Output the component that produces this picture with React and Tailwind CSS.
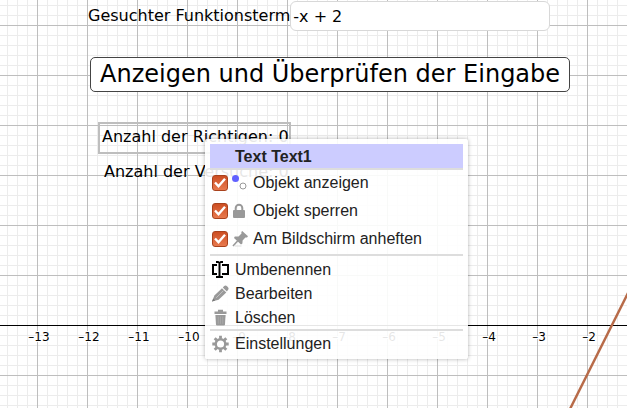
import { useState } from "react";

const axisTicks = [-13, -12, -11, -10, -9, -8, -7, -6, -5, -4, -3, -2];

// One unit is 50px, x = -13 sits at 37px
const toX = (value) => 37 + (value + 13) * 50;

const PointsIcon = () => (
  <svg viewBox="0 0 16 16" className="size-4 shrink-0">
    <circle cx="3.5" cy="3.5" r="3.5" fill="#6161ff" />
    <circle cx="11" cy="11" r="3" fill="#fff" stroke="#999" />
  </svg>
);

const LockIcon = () => (
  <svg viewBox="0 0 16 16" className="size-4 shrink-0">
    <path d="M3.7 8V5.1a3.3 3.3 0 0 1 6.6 0V8" fill="none" stroke="#999" strokeWidth="2" />
    <rect x="1" y="7" width="12" height="8" rx="1" fill="#999" />
  </svg>
);

const PinIcon = () => (
  <svg viewBox="0 0 16 16" className="size-4 shrink-0">
    <path d="M10.2 0 16 5.2 15 6.5 13.4 6.4 10.6 9.4 10.4 12.6 9 13.6 2 6.9 2.8 5.6 6.5 5.4 9.5 2.5 9.3 1Z" fill="#999" />
    <path d="M6.2 9.2 1 15" stroke="#999" strokeWidth="1.6" />
    <path d="M2.5 15h7" stroke="#ddd" />
  </svg>
);

const RenameIcon = () => (
  <svg viewBox="0 0 18 18" className="size-[18px] shrink-0" fill="none" stroke="#000" strokeWidth="2">
    <path d="M5 4H1v9h4M10 4h6v9h-6" />
    <path d="M4 1h2l1.5 1L9 1h2M7.5 1.5v14M4 16h2l1.5-1L9 16h2" strokeWidth="2" />
  </svg>
);

const PencilIcon = () => (
  <svg viewBox="0 0 18 18" className="size-[18px] shrink-0" fill="#999">
    <path d="M0 16.6 2.4 10.6 10 3.2 14.3 7.4 6.6 14.8Z" />
    <path d="m10.8 2.4 1.4-1.3c.9-.8 2-.7 2.8.1l1 1c.8.8.8 1.9 0 2.8l-1.2 1.5Z" />
    <path d="m4.2 12.8 7.3-7.2" stroke="#ccc" strokeWidth=".8" />
    <path d="m1.2 13.7 2 1.8L0 16.6Z" fill="#777" />
  </svg>
);

const TrashIcon = () => (
  <svg viewBox="0 0 18 18" className="size-[18px] shrink-0" fill="#999">
    <path d="M2.5 2.5H6V.8h5v1.7h3.5V5h-12Z" />
    <path d="M3.4 6h10.2L13 15.5q-.1 1-1 1H5q-.9 0-1-1Z" />
    <path d="M6.3 7.5v7.3M8.5 7.5v7.3M10.7 7.5v7.3" stroke="#ababab" strokeWidth=".8" />
  </svg>
);

const GearIcon = () => (
  <svg viewBox="0 0 18 18" className="size-[18px] shrink-0" fill="none" stroke="#999">
    <circle cx="8.5" cy="9" r="4.8" strokeWidth="2.4" />
    <path
      d="M8.5.8v3M8.5 14.2v3M.3 9h3M13.7 9h3M2.7 3.2l2.1 2.1M12.2 12.7l2.1 2.1M14.3 3.2l-2.1 2.1M4.8 12.7l-2.1 2.1"
      strokeWidth="2.8"
    />
  </svg>
);

const toggles = [
  { id: "show", label: "Objekt anzeigen", Icon: PointsIcon },
  { id: "lock", label: "Objekt sperren", Icon: LockIcon },
  { id: "pin", label: "Am Bildschirm anheften", Icon: PinIcon },
];

const actions = [
  { label: "Umbenennen", Icon: RenameIcon },
  { label: "Bearbeiten", Icon: PencilIcon },
  { label: "Löschen", Icon: TrashIcon },
];

const Graph = () => (
  <svg className="absolute inset-0 size-full" aria-hidden="true">
    <defs>
      <pattern id="minor" x="7" y="5" width="10" height="10" patternUnits="userSpaceOnUse">
        <path d="M.5 0v10M0 .5h10" stroke="#ececec" />
      </pattern>
      <pattern id="major" x="37" y="25" width="50" height="50" patternUnits="userSpaceOnUse">
        <path d="M.5 0v50M0 .5h50" stroke="#bebebe" />
      </pattern>
    </defs>
    <rect width="100%" height="100%" fill="url(#minor)" />
    <rect width="100%" height="100%" fill="url(#major)" />
    <rect y="325" width="100%" height="1" fill="#000" />
    {axisTicks.map((tick) => (
      <text
        key={tick}
        x={toX(tick) + 2}
        y="341"
        textAnchor="middle"
        className="fill-black stroke-white stroke-2 text-[12px] [font-family:'DejaVu_Sans',sans-serif] [paint-order:stroke]"
      >
        {`–${Math.abs(tick)}`}
      </text>
    ))}
    <path d="M570 409 652 245" stroke="#b86b49" strokeWidth="2.5" />
  </svg>
);

const ActionItem = ({ label, Icon }) => (
  <button type="button" role="menuitem" className="flex h-6 w-full items-center gap-[5px] pt-0.5 pl-0.5 text-left">
    <Icon />
    <span>{label}</span>
  </button>
);

const ContextMenu = () => {
  const [checked, setChecked] = useState({ show: true, lock: true, pin: true });

  const handleChange = (e) => {
    const { name, checked: value } = e.target;
    setChecked((prev) => ({ ...prev, [name]: value }));
  };

  return (
    <div
      role="menu"
      className="absolute top-[139px] left-[205px] w-[263px] rounded-xs bg-white/90 p-[5px] pb-1 text-[16px] leading-6 text-[#222] shadow-[0_0_4px_rgba(0,0,0,0.3)] [font-family:'Liberation_Sans',Arial,sans-serif]"
    >
      <div className="h-[26px] border-b-2 border-[#ddd] bg-[#ccccff] pt-px pl-[25px] font-bold">Text Text1</div>

      {toggles.map(({ id, label, Icon }) => (
        <label key={id} className="flex h-7 items-center gap-1 pb-0.5 pl-0.5">
          <span className="grid size-4 shrink-0 place-items-center">
            <input
              type="checkbox"
              name={id}
              checked={checked[id]}
              onChange={handleChange}
              className="peer col-start-1 row-start-1 size-4 appearance-none rounded-[3px] border border-[#a9421d] bg-linear-to-b from-[#cc4e22] to-[#e8794d]"
            />
            <svg viewBox="0 0 16 16" className="pointer-events-none invisible col-start-1 row-start-1 size-4 peer-checked:visible">
              <path d="m3 7.5 3.5 3.8 6.5-7.6" fill="none" stroke="#fff" strokeWidth="2.4" />
            </svg>
          </span>
          <Icon />
          <span className="pl-px">{label}</span>
        </label>
      ))}

      <div className="border-y-2 border-[#ddd] pt-px">
        {actions.map((action) => (
          <ActionItem key={action.label} {...action} />
        ))}
      </div>

      <ActionItem label="Einstellungen" Icon={GearIcon} />
    </div>
  );
};

const App = () => {
  const [term, setTerm] = useState("-x + 2");

  return (
    <main className="relative min-h-screen overflow-hidden bg-white text-[16px] text-black [font-family:'DejaVu_Sans',sans-serif]">
      <Graph />

      <div className="relative flex flex-col items-start pt-px pl-[88px]">
        <div className="flex items-center">
          <label htmlFor="term">Gesuchter Funktionsterm</label>
          <input
            id="term"
            type="text"
            value={term}
            onChange={(e) => setTerm(e.target.value)}
            className="h-[30px] w-[260px] rounded-md border border-[#d8d8d8] bg-white px-0.5"
          />
        </div>

        <button
          type="button"
          className="mt-[26px] ml-0.5 h-[35px] rounded-[5px] border border-[#444] bg-white px-[9px] pb-0.5 text-[24px] leading-8"
        >
          Anzeigen und Überprüfen der Eingabe
        </button>

        <p className="mt-[30px] ml-2.5 border-2 border-[#bebebe] pt-px pb-[3px] pl-0.5">Anzahl der Richtigen: 0</p>
        <p className="mt-1.5 ml-4">Anzahl der Versuche: 0</p>
      </div>

      <ContextMenu />
    </main>
  );
};

export default App;
